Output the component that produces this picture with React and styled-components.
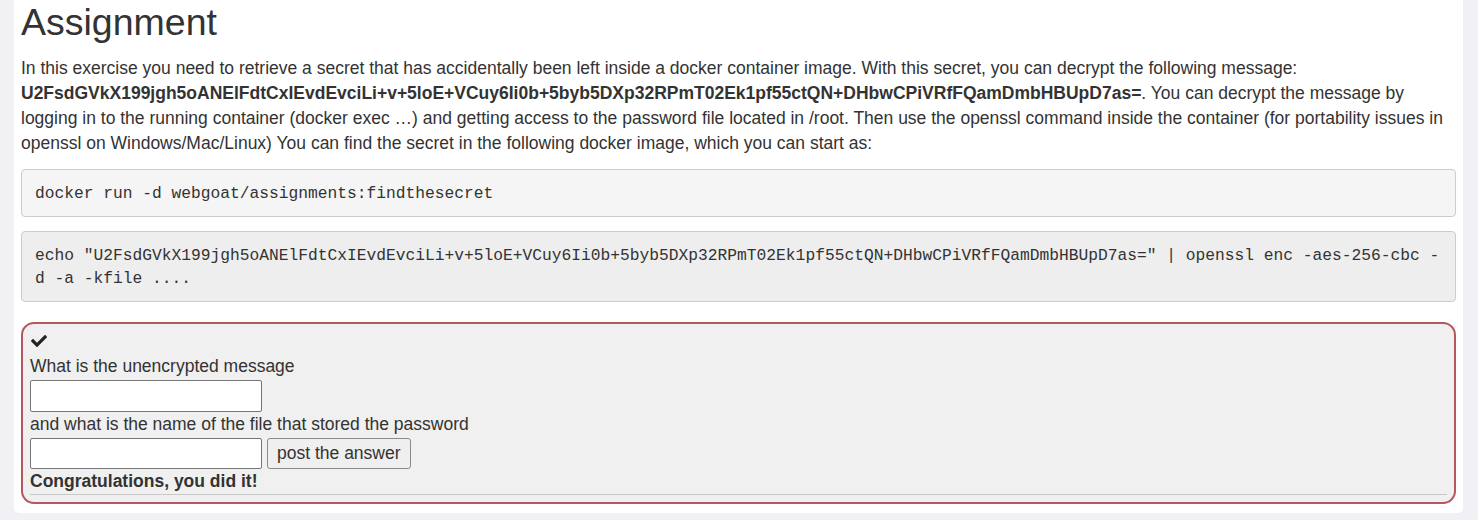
import React from "react";
import styled, { createGlobalStyle } from "styled-components";
import { FaCheck } from "react-icons/fa";

const Global = createGlobalStyle`
  html, body { margin: 0; padding: 0; background: #f0f0f5; }
  body { font-family: "Liberation Sans", Arial, sans-serif; color: #333; }
`;

const Page = styled.div`
  padding: 0 15px 8px 14px;
`;

const Card = styled.div`
  background: #fff;
  border-radius: 0 0 5px 5px;
  padding: 2px 7px 9px 7px;
`;

const Title = styled.h1`
  margin: 0 0 12.5px 0;
  font-size: 37.5px;
  font-weight: 400;
  line-height: 1.1;
  color: #333;
`;

const Para = styled.p`
  margin: 0 0 13.5px 0;
  font-size: 17.5px;
  line-height: 25px;
`;

const Code = styled.pre`
  margin: 0 0 ${(p) => p.$mb || 14}px 0;
  padding: 11.5px 13px;
  font-family: "Liberation Mono", "Courier New", monospace;
  font-size: 16.25px;
  line-height: 23px;
  color: #333;
  background: ${(p) => p.$bg || "#f5f5f5"};
  border: 1px solid #ccc;
  border-radius: 4px;
  white-space: pre-wrap;
  word-break: break-all;
`;

const AttackBox = styled.div`
  border: 2px solid #b5585e;
  border-radius: 13px;
  background: #f0f0f0;
  padding: 5px 7px 7px 7px;
  font-size: 17.5px;
  line-height: 25px;
`;

const IconLine = styled.div`
  height: 25px;
  display: flex;
  align-items: center;
  padding-left: 1px;
  color: #222;
`;

const Label = styled.div`
  line-height: 25px;
`;

const TextInput = styled.input`
  display: block;
  box-sizing: border-box;
  width: 232px;
  height: ${(p) => p.$h || 32}px;
  margin: ${(p) => p.$mt || 0}px 0 0 0;
  border: 1px solid #767676;
  border-radius: 2px;
  background: #fff;
  font-family: "Liberation Sans", Arial, sans-serif;
  font-size: 17.5px;
  padding: 1px 3px;
`;

const Row = styled.div`
  display: flex;
  align-items: stretch;
  gap: 5px;
  margin-top: 1px;
`;

const Button = styled.button`
  box-sizing: border-box;
  height: 31px;
  padding: 0 9px;
  border: 1px solid #8a8a8a;
  border-radius: 3px;
  background: #efefef;
  color: #333;
  font-family: "Liberation Sans", Arial, sans-serif;
  font-size: 17.5px;
  line-height: 1;
`;

const Success = styled.div`
  font-weight: 700;
  line-height: 25px;
`;

const Rule = styled.hr`
  margin: 0;
  border: 0;
  border-top: 1px solid #c8c8c8;
`;

const SECRET =
  "U2FsdGVkX199jgh5oANElFdtCxIEvdEvciLi+v+5loE+VCuy6Ii0b+5byb5DXp32RPmT02Ek1pf55ctQN+DHbwCPiVRfFQamDmbHBUpD7as=";

export default function App() {
  return (
    <>
      <Global />
      <Page>
        <Card>
          <Title>Assignment</Title>
          <Para>
            In this exercise you need to retrieve a secret that has accidentally been left inside a docker
            container image. With this secret, you can decrypt the following message:{" "}
            <b>{SECRET}</b>. You can decrypt the message by logging in to the running container (docker exec
            …) and getting access to the password file located in /root. Then use the openssl command inside
            the container (for portability issues in openssl on Windows/Mac/Linux) You can find the secret in
            the following docker image, which you can start as:
          </Para>
          <Code>docker run -d webgoat/assignments:findthesecret</Code>
          <Code $bg="#eeeeee" $mb={19.5}>
            {`echo "${SECRET}" | openssl enc -aes-256-cbc -\nd -a -kfile ....`}
          </Code>
          <AttackBox>
            <IconLine>
              <FaCheck size={16} />
            </IconLine>
            <Label>What is the unencrypted message</Label>
            <TextInput type="text" $mt={1} />
            <Label>and what is the name of the file that stored the password</Label>
            <Row>
              <TextInput type="text" $h={31} />
              <Button type="button">post the answer</Button>
            </Row>
            <Success>Congratulations, you did it!</Success>
            <Rule />
          </AttackBox>
        </Card>
      </Page>
    </>
  );
}
